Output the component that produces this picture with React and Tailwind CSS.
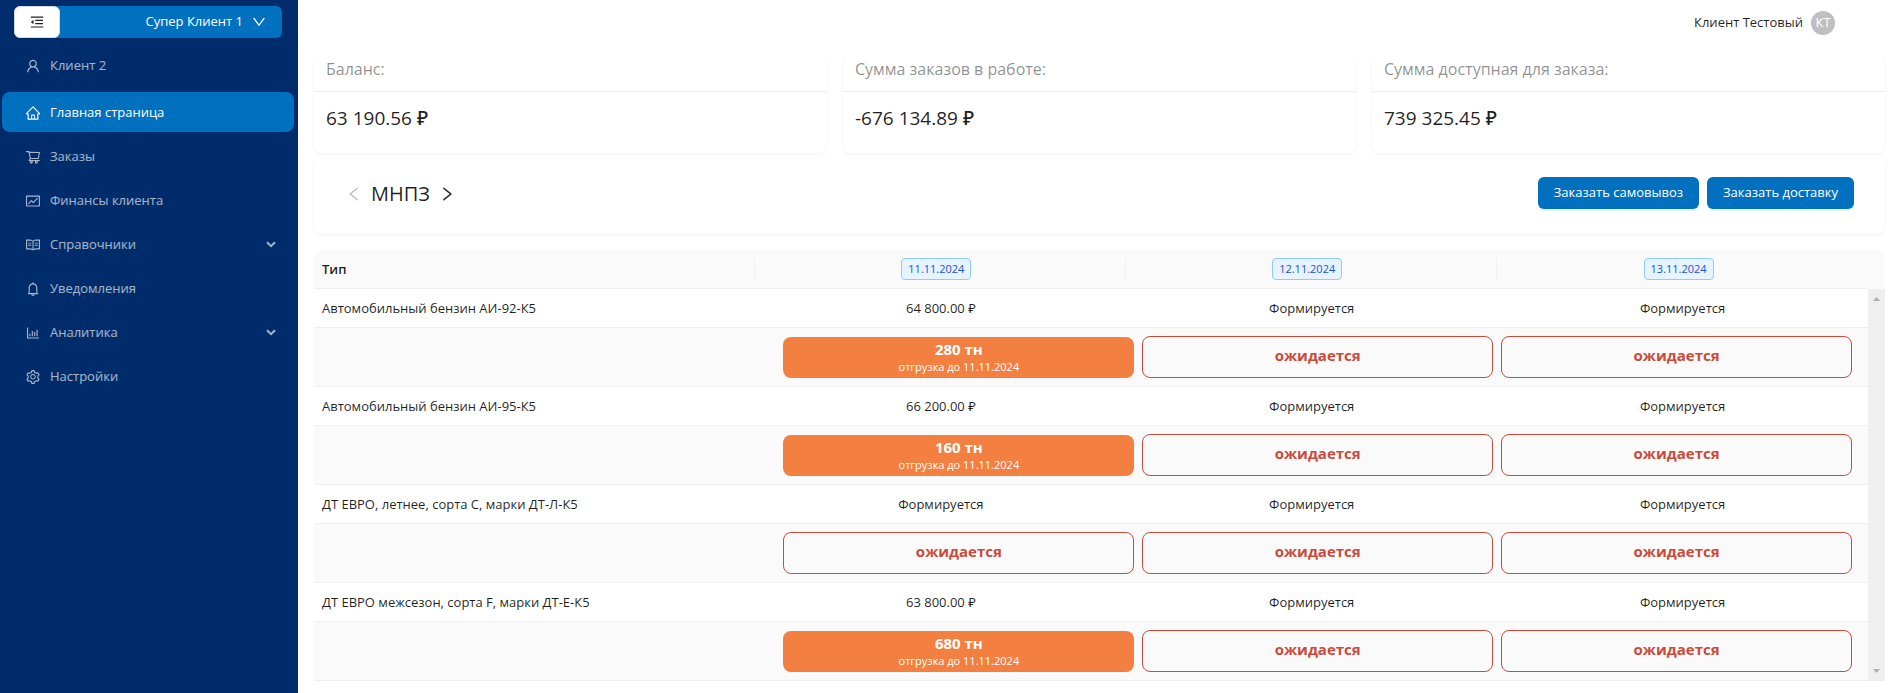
import { Fragment } from "react";
import {
  AiOutlineMenuFold,
  AiOutlineUser,
  AiOutlineHome,
  AiOutlineShoppingCart,
  AiOutlineFund,
  AiOutlineRead,
  AiOutlineBell,
  AiOutlineBarChart,
  AiOutlineSetting,
  AiOutlineDown,
  AiOutlineLeft,
  AiOutlineRight,
} from "react-icons/ai";

const menu = [
  { label: "Клиент 2", Icon: AiOutlineUser },
  { label: "Главная страница", Icon: AiOutlineHome, active: true },
  { label: "Заказы", Icon: AiOutlineShoppingCart },
  { label: "Финансы клиента", Icon: AiOutlineFund },
  { label: "Справочники", Icon: AiOutlineRead, group: true },
  { label: "Уведомления", Icon: AiOutlineBell },
  { label: "Аналитика", Icon: AiOutlineBarChart, group: true },
  { label: "Настройки", Icon: AiOutlineSetting },
];

const balances = [
  { title: "Баланс:", value: "63 190.56 ₽" },
  { title: "Сумма заказов в работе:", value: "-676 134.89 ₽" },
  { title: "Сумма доступная для заказа:", value: "739 325.45 ₽" },
];

const dates = ["11.11.2024", "12.11.2024", "13.11.2024"];

const products = [
  { name: "Автомобильный бензин АИ-92-К5", price: "64 800.00 ₽", volume: "280 тн" },
  { name: "Автомобильный бензин АИ-95-К5", price: "66 200.00 ₽", volume: "160 тн" },
  { name: "ДТ ЕВРО, летнее, сорта С, марки ДТ-Л-К5" },
  { name: "ДТ ЕВРО межсезон, сорта F, марки ДТ-Е-К5", price: "63 800.00 ₽", volume: "680 тн" },
];

function GroupArrow() {
  return (
    <svg viewBox="0 0 10 7" className="ml-auto h-[7px] w-[10px]" fill="none" stroke="currentColor" strokeWidth="2">
      <path d="M1 1.2 5 5.2 9 1.2" />
    </svg>
  );
}

function Sidebar() {
  return (
    <aside className="w-[298px] shrink-0 bg-[#002c6c] text-[13px] text-white">
      <div className="ml-3.5 mr-4 mt-1.5 flex h-8 rounded-md bg-[#0070bf]">
        <button
          type="button"
          aria-label="Свернуть меню"
          className="flex w-[46px] items-center justify-center rounded-md border border-[#d9d9d9] bg-white text-black/88"
        >
          <AiOutlineMenuFold size={16} />
        </button>
        <button type="button" className="flex flex-1 items-center justify-end gap-2 pr-[15px]">
          Супер Клиент 1
          <AiOutlineDown size={16} />
        </button>
      </div>
      <nav className="ml-0.5 mr-1 mt-[7px] flex flex-col gap-1">
        {menu.map(({ label, Icon, active, group }, i) => (
          <a
            key={label}
            href="#"
            className={`flex h-10 items-center gap-[9px] rounded-lg pl-[23px] pr-[18px] pt-px ${
              active ? "bg-[#0070bf] font-medium text-white" : "text-white/65"
            } ${i === 0 ? "mb-[3px]" : ""}`}
          >
            <Icon size={16} />
            {label}
            {group && <GroupArrow />}
          </a>
        ))}
      </nav>
    </aside>
  );
}

function BalanceCard({ title, value }) {
  return (
    <section className="rounded-lg bg-white shadow-[0_1px_2px_rgba(0,0,0,0.03),0_1px_6px_-1px_rgba(0,0,0,0.02),0_2px_4px_rgba(0,0,0,0.02)]">
      <h2 className="border-b border-[#f0f0f0] px-3 pb-2.5 pt-1 text-base font-normal text-black/45">{title}</h2>
      <p className="px-3 pb-[21px] pt-3 text-[19px] font-medium leading-7 text-black/88">{value}</p>
    </section>
  );
}

function SlotButton({ volume }) {
  if (volume) {
    return (
      <button type="button" className="mt-px flex h-[41px] flex-col items-center justify-center rounded-lg bg-[#f38040] pb-0.5 text-white">
        <span className="text-[15px] font-bold leading-5">{volume}</span>
        <span className="text-[11px] leading-4">отгрузка до 11.11.2024</span>
      </button>
    );
  }
  return (
    <button type="button" className="h-[42px] rounded-lg border border-[#cd4a3a] pb-1 text-[15px] font-bold text-[#cd4a3a]">
      ожидается
    </button>
  );
}

function PriceTable() {
  return (
    <table className="mt-4 w-full table-fixed border-separate border-spacing-0 text-[13px] leading-[22px] text-black/88">
      <colgroup>
        <col className="w-[28.1%]" />
        <col />
        <col />
        <col />
        <col className="w-[17px]" />
      </colgroup>
      <thead>
        <tr className="bg-[#fafafa]">
          <th className="rounded-tl-lg border-b border-[#f0f0f0] py-2 text-left font-semibold">
            <div className="border-r border-[#f0f0f0] px-2">Тип</div>
          </th>
          {dates.map((date, i) => (
            <th key={date} className="border-b border-[#f0f0f0] py-2 font-medium">
              <div className={`flex h-[22px] justify-center pr-2 ${i < 2 ? "border-r border-[#f0f0f0]" : ""}`}>
                <span className="rounded border border-[#91caff] bg-[#e6f4ff] px-1.5 text-[11px] leading-5 text-[#1d4fd8]">
                  {date}
                </span>
              </div>
            </th>
          ))}
          <th className="rounded-tr-lg" />
        </tr>
      </thead>
      <tbody>
        {products.map(({ name, price, volume }, row) => (
          <Fragment key={name}>
            <tr>
              <td className="border-b border-[#f0f0f0] px-2 py-2">{name}</td>
              {dates.map((date, i) => (
                <td key={date} className="border-b border-[#f0f0f0] py-2 text-center">
                  {i === 0 && price ? price : "Формируется"}
                </td>
              ))}
              {row === 0 && (
                <td rowSpan={8} className="h-px bg-[#efefef] p-0">
                  <div className="flex h-full flex-col items-center justify-between py-2 text-[#b0b0b0]">
                    <svg viewBox="0 0 7 4" className="h-1 w-[7px]" fill="currentColor">
                      <path d="M3.5 0 7 4H0z" />
                    </svg>
                    <svg viewBox="0 0 7 4" className="h-1 w-[7px]" fill="currentColor">
                      <path d="M0 0h7L3.5 4z" />
                    </svg>
                  </div>
                </td>
              )}
            </tr>
            <tr className="bg-[#fafafa]">
              <td className="border-b border-[#f0f0f0]" />
              <td colSpan={3} className="border-b border-[#f0f0f0] py-2 pl-7 pr-4">
                <div className="grid grid-cols-3 gap-2">
                  {dates.map((date, i) => (
                    <SlotButton key={date} volume={i === 0 ? volume : undefined} />
                  ))}
                </div>
              </td>
            </tr>
          </Fragment>
        ))}
      </tbody>
    </table>
  );
}

export default function App() {
  return (
    <div className="flex min-h-screen bg-white font-['Open_Sans','Noto_Sans',sans-serif]">
      <Sidebar />
      <div className="min-w-0 flex-1">
        <header className="flex h-[46px] items-center justify-end gap-2 pr-[60px] text-[13px] text-black/88">
          Клиент Тестовый
          <span className="flex size-6 items-center justify-center rounded-full bg-[#bfbfbf] text-white">КТ</span>
        </header>
        <main className="mt-[7px] pl-4 pr-[10px]">
          <div className="grid grid-cols-3 gap-4">
            {balances.map((b) => (
              <BalanceCard key={b.title} {...b} />
            ))}
          </div>
          <section className="flex h-[81px] items-center justify-between rounded-lg bg-white pl-[31px] pr-[31px] shadow-[0_1px_2px_rgba(0,0,0,0.03),0_1px_6px_-1px_rgba(0,0,0,0.02),0_2px_4px_rgba(0,0,0,0.02)]">
            <div className="flex items-center gap-2 text-black/88">
              <button type="button" aria-label="Предыдущий" disabled className="text-black/25">
                <AiOutlineLeft size={18} />
              </button>
              <h1 className="text-xl font-medium">МНПЗ</h1>
              <button type="button" aria-label="Следующий">
                <AiOutlineRight size={18} />
              </button>
            </div>
            <div className="flex gap-2 pb-0.5">
              <button type="button" className="h-8 rounded-md bg-[#0070bf] px-4 text-[13px] text-white shadow-[0_2px_0_rgba(5,145,255,0.1)]">
                Заказать самовывоз
              </button>
              <button type="button" className="h-8 rounded-md bg-[#0070bf] px-4 text-[13px] text-white shadow-[0_2px_0_rgba(5,145,255,0.1)]">
                Заказать доставку
              </button>
            </div>
          </section>
          <PriceTable />
        </main>
      </div>
    </div>
  );
}
